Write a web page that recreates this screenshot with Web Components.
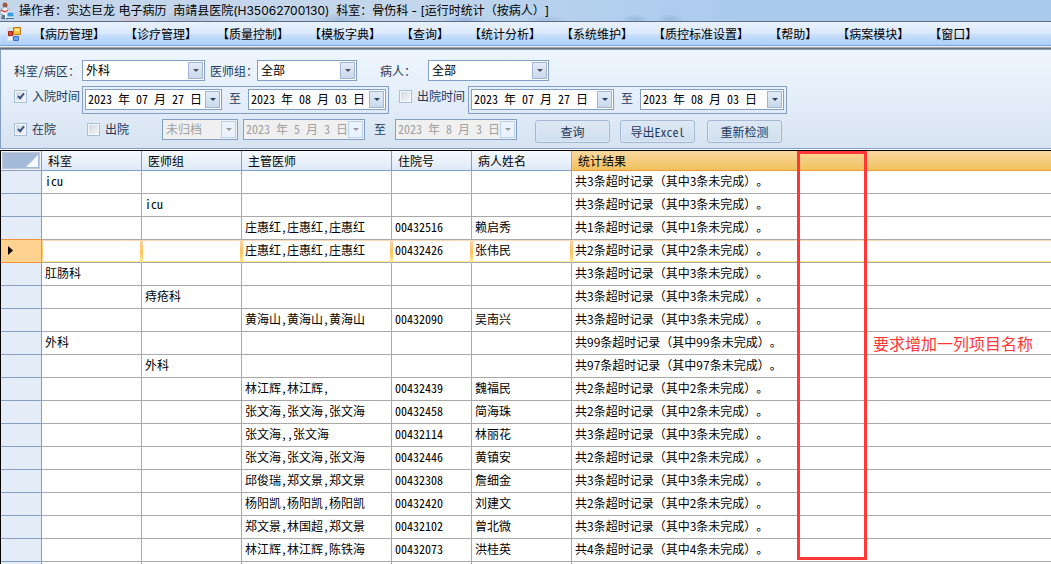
<!DOCTYPE html>
<html lang="zh-CN">
<head>
<meta charset="utf-8">
<title>运行时统计（按病人）</title>
<style>
html, body { height: 100%; margin: 0; }
body {
  font: 12px/16px "Noto Sans CJK SC", sans-serif;
  font-feature-settings: "hwid";
  text-spacing-trim: space-all;
  color: #000;
  background: #fff;
  overflow: hidden;
}
</style>
</head>
<body>
<app-window>
  <title-bar>操作者：实达巨龙 电子病历  南靖县医院(H35062700130)  科室：骨伤科 - [运行时统计（按病人）]</title-bar>
  <menu-bar></menu-bar>
  <filter-panel></filter-panel>
  <record-grid></record-grid>
  <column-note slot="overlay">要求增加一列项目名称</column-note>
</app-window>

<script>
const define = (name, html, setup) => {
  const template = document.createElement('template');
  template.innerHTML = html;
  customElements.define(name, class extends HTMLElement {
    constructor() {
      super();
      this.attachShadow({ mode: 'open' }).append(template.content.cloneNode(true));
    }
    connectedCallback() {
      if (setup && !this.ready) { this.ready = true; setup(this, this.shadowRoot); }
    }
  });
};

define('app-window', `
<style>
:host { display: flex; flex-direction: column; height: 100vh; position: relative; overflow: hidden; }
</style>
<slot></slot><slot name="overlay"></slot>`);

define('title-bar', `
<style>
:host {
  display: flex; align-items: center; gap: 5px; height: 21px; flex: none;
  border-bottom: 1px solid #5b6d86; box-sizing: content-box;
  background:
    radial-gradient(ellipse 30px 8px at 340px 20px, #8fa9cc99, transparent),
    radial-gradient(ellipse 40px 9px at 190px 20px, #a3b4cc99, transparent),
    radial-gradient(ellipse 16px 6px at 130px 20px, #e0a8b077, transparent),
    radial-gradient(ellipse 16px 5px at 264px 20px, #7fb8b077, transparent),
    radial-gradient(ellipse 22px 5px at 465px 20px, #7c94d888, transparent),
    radial-gradient(ellipse 22px 5px at 545px 20px, #8aa9cf77, transparent),
    radial-gradient(ellipse 14px 4px at 635px 19px, #8aa9cf99, transparent),
    radial-gradient(ellipse 14px 5px at 670px 19px, #8aa9cf99, transparent),
    linear-gradient(90deg, #c5d6ea, #c3d6ec 40%, #b4d0ee 55%, #abcbee 70%);
  font-family: Inter, "Noto Sans CJK SC", sans-serif;
  font-feature-settings: normal;
}
svg { flex: none; }
h1 { margin: 0; font: inherit; white-space: pre; }
</style>
<svg width="14" height="18" viewBox="0 0 14 18" aria-hidden="true">
  <circle cx="5" cy="3" r="2.5" fill="#a05a3c"/>
  <path d="M1 7 5 5l4 2 1 5H7l1 5H2l1-5H0z" fill="#f4f7fb" stroke="#8797ab" stroke-width=".7"/>
  <path d="M1 8l4 2 3-2" stroke="#d04646" stroke-width="1.4" fill="none"/>
  <path d="M2 13h3v4H1z" fill="#5d7894"/>
  <path d="M7 10h7v5H7z" fill="#3b9be0" stroke="#dfefff"/>
  <path d="M6 16h8v1H6z" fill="#4c718f"/>
</svg>
<h1><slot></slot></h1>`);

define('menu-bar', `
<style>
:host {
  display: block; flex: none; height: 23px;
  background: linear-gradient(#e9f2fd, #dceafc 45%, #c4dcfb 60%, #aed0fb);
  border-bottom: 1px solid #7aa3d6;
  box-shadow: 0 1px #e9f1fb, 0 2px #a3a3a3, 0 3px #6e6e6e;
  margin-bottom: 3px;
}
nav { display: flex; align-items: center; gap: 20px; height: 23px; padding-left: 7px; }
svg { flex: none; margin-right: -8px; }
a { color: #000; text-decoration: none; white-space: nowrap; font-feature-settings: normal; }
</style>
<nav>
  <svg width="14" height="14" viewBox="0 0 14 14" aria-hidden="true">
    <path d="M0 0h14v14H0z" fill="#d9dfe8"/>
    <path d="M6.500 .5h7v7h-7z" fill="#f6c63e" stroke="#b87a1c"/>
    <path d="M8 2h4v2H8z" fill="#fff1a0"/>
    <path d="M1.500 4.500h4v4h-4z" fill="#d64b32" stroke="#a4281b"/>
    <path d="M6.500 9.500h5v4h-5z" fill="#6f9ff0" stroke="#3d6fd0"/>
    <path d="M1 10h4v3H1z" fill="#f2f4f7"/>
  </svg>
</nav>`, (host, root) => {
  const nav = root.querySelector('nav');
  for (const name of ['病历管理', '诊疗管理', '质量控制', '模板字典', '查询', '统计分析', '系统维护', '质控标准设置', '帮助', '病案模块', '窗口']) {
    const a = document.createElement('a');
    a.href = '#';
    a.textContent = `【${name}】`;
    nav.append(a);
  }
});

/* Look shared by the drop-down and the date box. */
const fieldStyle = `
:host { display: block; flex: none; width: var(--w); }
.box {
  display: flex; height: 21px; box-sizing: border-box;
  border: 1px solid #849fc5; background: #fff; color: #000;
}
.off { background: #f0f0f0; color: #a0a0a0; }
select, input {
  flex: 1; min-width: 0; width: 100%; border: 0; margin: 0; padding: 0 0 2px 3px;
  background: none; appearance: none; outline: none;
  font: inherit; line-height: 16px; color: inherit; opacity: 1;
  font-feature-settings: inherit;
}
input { padding-left: 2px; }
.arrow {
  flex: none; width: 15px; margin: 1px; padding: 0; box-sizing: border-box;
  border: 1px solid #a3b5d3; background: linear-gradient(#e3ecf8, #c9d9ec);
  display: grid; place-items: center; pointer-events: none;
}
.arrow::before {
  content: ""; border: 3px solid transparent; border-top-color: #2b4263; border-bottom: 0;
}
.off .arrow { background: #eaf3fd; border-color: #bdd2ea; }
.off .arrow::before { border-top-color: #9a9a9a; }
`;

define('combo-box', `
<style>${fieldStyle}
.arrow::before { border-top-color: #555; }
</style>
<div class="box"><select><option></option></select><span class="arrow"></span></div>`, (host, root) => {
  const select = root.querySelector('select');
  select.options[0].textContent = host.getAttribute('value');
  select.setAttribute('aria-label', host.getAttribute('label'));
  select.disabled = host.hasAttribute('disabled');
  root.querySelector('.box').classList.toggle('off', select.disabled);
});

define('date-field', `
<style>${fieldStyle}
</style>
<div class="box"><input type="text"><button class="arrow" type="button" aria-label="选择日期"></button></div>`, (host, root) => {
  const input = root.querySelector('input');
  input.value = host.getAttribute('value');
  input.setAttribute('aria-label', host.getAttribute('label'));
  input.disabled = host.hasAttribute('disabled');
  root.querySelector('button').disabled = input.disabled;
  root.querySelector('.box').classList.toggle('off', input.disabled);
});

define('check-field', `
<style>
:host { display: block; flex: none; width: var(--w); }
label { display: flex; align-items: center; gap: 5px; white-space: nowrap; }
input {
  appearance: none; flex: none; width: 13px; height: 13px; margin: 0; box-sizing: border-box;
  border: 1px solid #a8bfdc; outline: 1px solid #f6f9fd; outline-offset: -2px;
  background: linear-gradient(135deg, #d0d6de, #f7f9fb);
  display: grid; place-items: center;
}
input:checked::before {
  content: ""; width: 2px; height: 5px; margin-bottom: 2px;
  border: solid #3c5684; border-width: 0 2px 2px 0; transform: rotate(40deg);
}
</style>
<label><input type="checkbox"><slot></slot></label>`, (host, root) => {
  root.querySelector('input').checked = host.hasAttribute('checked');
});

define('push-button', `
<style>
:host { display: block; flex: none; }
button {
  width: 75px; height: 23px; padding: 0; box-sizing: border-box;
  border: 1px solid #a5b8d3; border-radius: 3px;
  background: linear-gradient(#dde8f4, #d0deee); box-shadow: inset 0 0 0 1px #dfe9f5;
  color: #1e395b; font: inherit; font-feature-settings: inherit; line-height: 16px;
}
</style>
<button type="button"><slot></slot></button>`);

define('filter-panel', `
<style>
:host {
  display: flex; flex-direction: column; gap: 5px; flex: none; padding: 10px 0 5px 13px;
  border: 1px solid #849fc5; border-right: 0;
  background: linear-gradient(#eef5fe, #e4eef9 50%, #d7e3f1);
  color: #1e395b; white-space: nowrap;
}
.row { display: flex; align-items: center; }
.row.top { align-items: flex-start; }
.top > check-field, .top > .to { margin-top: 2px; }
.row push-button { margin-top: 1px; }
.name { flex: none; width: var(--w); }
.range {
  display: flex; box-sizing: border-box; padding: 2px 2px 3px;
  border: 1px solid #849fc5;
}
.to { flex: none; text-align: center; width: 26px; line-height: 18px; }
.to.wide { width: 30px; line-height: 16px; }
.gap5 { margin-left: 5px; }
.gap10 { margin-left: 10px; }
.gap12 { margin-left: 12px; }
.gap18 { margin-left: 18px; }
.gap23 { margin-left: 23px; }
</style>
<div class="row">
  <span class="name" style="--w:68px">科室/病区：</span>
  <combo-box style="--w:123px" label="科室/病区" value="外科"></combo-box>
  <span class="name gap5" style="--w:47px">医师组：</span>
  <combo-box style="--w:100px" label="医师组" value="全部"></combo-box>
  <span class="name gap23" style="--w:48px">病人：</span>
  <combo-box style="--w:121px" label="病人" value="全部"></combo-box>
</div>
<div class="row top">
  <check-field style="--w:68px" checked>入院时间</check-field>
  <div class="range">
    <date-field style="--w:137px" label="入院时间起" value="2023 年 07 月 27 日"></date-field>
    <span class="to">至</span>
    <date-field style="--w:138px" label="入院时间止" value="2023 年 08 月 03 日"></date-field>
  </div>
  <check-field class="gap10" style="--w:69px">出院时间</check-field>
  <div class="range">
    <date-field style="--w:143px" label="出院时间起" value="2023 年 07 月 27 日"></date-field>
    <span class="to">至</span>
    <date-field style="--w:144px" label="出院时间止" value="2023 年 08 月 03 日"></date-field>
  </div>
</div>
<div class="row top">
  <check-field style="--w:73px" checked>在院</check-field>
  <check-field style="--w:75px">出院</check-field>
  <combo-box style="--w:76px" label="归档状态" value="未归档" disabled></combo-box>
  <date-field class="gap5" style="--w:122px" label="归档起" value="2023 年 5 月 3 日" disabled></date-field>
  <span class="to wide">至</span>
  <date-field style="--w:122px" label="归档止" value="2023 年 8 月 3 日" disabled></date-field>
  <push-button class="gap18">查询</push-button>
  <push-button class="gap10">导出Excel</push-button>
  <push-button class="gap12">重新检测</push-button>
</div>`);

const result = (n) => `共${n}条超时记录（其中${n}条未完成）。`;
const rows = [
  ['icu', '', '', '', '', 3],
  ['', 'icu', '', '', '', 3],
  ['', '', '庄惠红,庄惠红,庄惠红', '00432516', '赖启秀', 1],
  ['', '', '庄惠红,庄惠红,庄惠红', '00432426', '张伟民', 2],
  ['肛肠科', '', '', '', '', 3],
  ['', '痔疮科', '', '', '', 3],
  ['', '', '黄海山,黄海山,黄海山', '00432090', '吴南兴', 3],
  ['外科', '', '', '', '', 99],
  ['', '外科', '', '', '', 97],
  ['', '', '林江辉,林江辉,', '00432439', '魏福民', 2],
  ['', '', '张文海,张文海,张文海', '00432458', '简海珠', 2],
  ['', '', '张文海,,张文海', '00432114', '林丽花', 3],
  ['', '', '张文海,张文海,张文海', '00432446', '黄镇安', 2],
  ['', '', '邱俊瑞,郑文景,郑文景', '00432308', '詹细金', 3],
  ['', '', '杨阳凯,杨阳凯,杨阳凯', '00432420', '刘建文', 2],
  ['', '', '郑文景,林国超,郑文景', '00432102', '曾北微', 3],
  ['', '', '林江辉,林江辉,陈铁海', '00432073', '洪桂英', 4],
  ['', '', '', '', '', 0],
];
const currentRow = 3;

define('record-grid', `
<style>
:host {
  display: block; flex: 1; min-height: 0; overflow: hidden; margin-top: 1px;
  border: solid #000; border-width: 1px 0 0 1px; background: #fff;
}
table { width: 100%; table-layout: fixed; border-collapse: separate; border-spacing: 0; }
th, td {
  box-sizing: border-box; height: 23px; padding: 0 0 2px 3px; line-height: 16px;
  border: solid #a9a9a9; border-width: 0 1px 1px 0;
  text-align: left; font-weight: normal; white-space: nowrap; overflow: hidden;
}
td:last-child { font-feature-settings: normal; }
th:last-child, td:last-child { border-right: 0; }
thead th {
  height: 20px; padding: 0 0 0 6px; border-color: #849fc5;
  background: linear-gradient(#f4f8fe, #dfeaf8);
}
thead th.sorted { background: linear-gradient(#f9d9a0, #f1c15f); border-color: #f09a3c; }
thead th:nth-last-child(2) { border-right-color: #f09a3c; }
thead th.corner { background: #a5bad8; box-shadow: inset 0 0 0 1px #f0f2f6, inset 0 0 0 2px #c0c8d4; padding: 0; }
.corner svg { display: block; margin-left: auto; margin-right: 3px; }
tbody th { background: #e4ecf7; border-color: #849fc5; padding-left: 7px; }
tr.before th { border-bottom-color: #f29536; }
tr.current th { background: #ffd38f; border-color: #f29536; }
tr.current td {
  border-right-color: transparent;
  background:
    linear-gradient(#fad9b8, #fad9b8) top / 100% 1px no-repeat border-box,
    linear-gradient(#ffe98f, #ffe98f) left bottom 1px / 100% 1px no-repeat border-box,
    linear-gradient(#f9d3ad, #ffc45c 50%, #ffe98f) left / 1px 100% no-repeat border-box,
    linear-gradient(#f9d3ad, #ffc45c 50%, #ffe98f) right / 2px 100% no-repeat border-box;
}
tr.current td:last-child { background-size: 100% 1px, 100% 1px, 1px 100%, 0 0; }
tbody svg { display: block; }
</style>
<table>
  <colgroup>
    <col style="width:41px"><col style="width:100px"><col style="width:100px">
    <col style="width:150px"><col style="width:80px"><col style="width:100px"><col>
  </colgroup>
  <thead><tr>
    <th class="corner" aria-label="全选"><svg width="12" height="12" viewBox="0 0 12 12"><path d="M12 0v12H0z" fill="#f7f9fc"/></svg></th>
    <th>科室</th><th>医师组</th><th>主管医师</th><th>住院号</th><th>病人姓名</th><th class="sorted">统计结果</th>
  </tr></thead>
  <tbody></tbody>
</table>`, (host, root) => {
  const body = root.querySelector('tbody');
  rows.forEach((cells, i) => {
    const tr = body.insertRow();
    if (i === currentRow) tr.className = 'current';
    if (i === currentRow - 1) tr.className = 'before';
    const head = document.createElement('th');
    head.scope = 'row';
    if (i === currentRow) {
      head.innerHTML = '<svg width="5" height="9" viewBox="0 0 5 9"><path d="M0 0l5 4.500L0 9z"/></svg>';
    }
    tr.append(head);
    cells.forEach((value, c) => {
      tr.insertCell().textContent = c === 5 ? (value ? result(value) : '') : value;
    });
  });
});

/* Mark-up drawn over the grid: a frame where the new column goes, and its remark. */
define('column-note', `
<style>
:host {
  position: absolute; left: 797px; top: 151px;
  display: flex; align-items: center; gap: 6px; height: 409px; pointer-events: none;
}
.frame { width: 70px; height: 100%; box-sizing: border-box; border: 3px solid #ff3737; }
.text { font-size: 16px; line-height: 24px; color: #ff3737; white-space: nowrap; margin-bottom: 26px; }
</style>
<div class="frame"></div><div class="text"><slot></slot></div>`);
</script>
</body>
</html>
